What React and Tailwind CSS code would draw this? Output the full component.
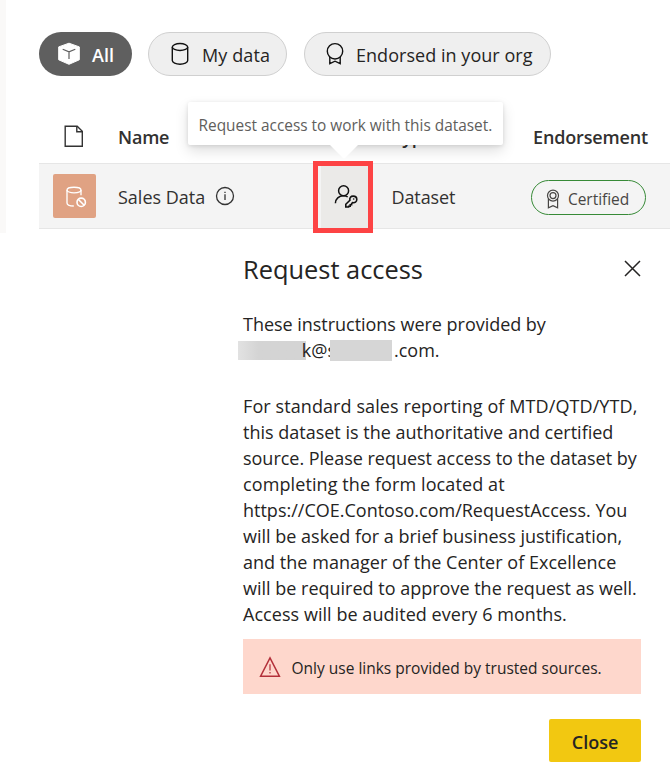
function BoxIcon() {
  return (
    <svg width="24" height="24" viewBox="0 0 24 24" className="shrink-0">
      <path d="M12 1.2 22.3 4.9V17.8L12 22.3 1.7 17.8V4.9Z" fill="#fff" stroke="#fff" strokeWidth="1" strokeLinejoin="round" />
      <path d="M5.7 7.2 12 9.9 18.3 7.2M12 9.9V17" fill="none" stroke="#5f5f5f" strokeWidth="1.2" />
    </svg>
  );
}

function CylinderIcon() {
  return (
    <svg width="18" height="24" viewBox="0 0 18 24" fill="none" stroke="#111" strokeWidth="1.4" className="shrink-0">
      <ellipse cx="9" cy="5" rx="7.7" ry="3.5" />
      <path d="M1.3 5V18.6C1.3 20.7 4.8 22.2 9 22.2S16.7 20.7 16.7 18.6V5" />
    </svg>
  );
}

function RibbonIcon() {
  return (
    <svg width="18" height="24" viewBox="0 0 18 24" fill="none" stroke="#111" strokeWidth="1.4" className="shrink-0">
      <circle cx="9" cy="9.3" r="7.7" />
      <path d="M3.8 15V21.7L9 19.2 14.2 21.7V15" />
    </svg>
  );
}

function FileIcon() {
  return (
    <svg width="20" height="23" viewBox="0 0 20 23" fill="none" stroke="#333" strokeWidth="1.4">
      <path d="M1.2 1.2H13.2L18.3 6.3V21.3H1.2Z" />
      <path d="M12.8 1.2V6.7H18.3" />
    </svg>
  );
}

function BlockedDataIcon() {
  return (
    <svg width="22" height="22" viewBox="0 0 22 22" fill="none" stroke="#fff" strokeWidth="1.35">
      <ellipse cx="9" cy="4" rx="7" ry="2.8" />
      <path d="M2 4V17C2 18.9 4.5 20 8.8 20M16 4V9.2" />
      <circle cx="16.2" cy="16.3" r="4.2" strokeWidth="1.6" />
      <path d="M13.2 13.3 19.2 19.3" strokeWidth="1.6" />
    </svg>
  );
}

function InfoIcon() {
  return (
    <svg width="20" height="20" viewBox="0 0 20 20" fill="none" stroke="#333" strokeWidth="1.3">
      <circle cx="10" cy="10" r="8.5" />
      <path d="M10 8.2V14M10 5.7V7.1" />
    </svg>
  );
}

function PersonKeyIcon() {
  return (
    <svg width="26" height="26" viewBox="0 0 26 26" fill="none" stroke="#111" strokeWidth="1.5">
      <circle cx="10.6" cy="6.8" r="5" />
      <path d="M2.4 19.3C2.4 14.8 6 11.8 10.4 11.8 12.2 11.8 13.6 12.2 14.7 13" />
      <path d="M12.8 20.3 16.9 16.2C16.3 13.9 17.9 12.1 20.1 12.1 22.3 12.1 23.8 13.5 23.8 15.5 23.8 17.8 21.8 19.1 19.6 18.6L18.6 19.6V20.8H17.2V22.2H15.6V23H12.8Z" strokeWidth="1.6" />
      <circle cx="20.7" cy="15" r="0.8" fill="#111" stroke="none" />
    </svg>
  );
}

function CertifiedIcon() {
  return (
    <svg width="14" height="20" viewBox="0 0 14 20" fill="none" stroke="#484644" strokeWidth="1.2" className="mt-[3px]">
      <circle cx="7" cy="6.6" r="5.5" />
      <circle cx="7" cy="6.6" r="3" />
      <path d="M2.4 10V18.8L7 16.6 11.6 18.8V10" />
    </svg>
  );
}

function WarningIcon() {
  return (
    <svg width="22" height="22" viewBox="0 0 22 22" fill="none" stroke="#b3303a" strokeWidth="1.5">
      <path d="M11 1.8 20.4 20.2H1.6Z" />
      <path d="M11 8.2V14.6M11 16V17.6" strokeWidth="1.2" />
    </svg>
  );
}

function Tooltip() {
  return (
    <div className="absolute left-[188px] top-[102px] z-10 h-[43px] w-[315px] rounded-[2px] bg-white pl-[10.5px] text-[15.4px] leading-[48px] text-[#605e5c] shadow-[0_6px_14px_rgba(0,0,0,0.13),0_1px_4px_rgba(0,0,0,0.11)]">
      Request access to work with this dataset.
      <svg width="28" height="14" viewBox="0 0 28 14" className="absolute left-[142px] top-[43px]">
        <path d="M0 0H28L15 13Q14 14 13 13Z" fill="#fff" />
      </svg>
    </div>
  );
}

const instructions = [
  { text: "For standard sales reporting of MTD/QTD/YTD,", spacing: "tracking-[0.09px]" },
  { text: "this dataset is the authoritative and certified", spacing: "tracking-normal" },
  { text: "source. Please request access to the dataset by", spacing: "tracking-[-0.02px]" },
  { text: "completing the form located at", spacing: "tracking-[0.1px]" },
  { text: "https://COE.Contoso.com/RequestAccess. You", spacing: "tracking-normal" },
  { text: "will be asked for a brief business justification,", spacing: "tracking-normal" },
  { text: "and the manager of the Center of Excellence", spacing: "tracking-[0.03px]" },
  { text: "will be required to approve the request as well.", spacing: "tracking-normal" },
  { text: "Access will be audited every 6 months.", spacing: "tracking-[0.05px]" },
];

export default function App() {
  return (
    <div className="relative h-[777px] w-[670px] overflow-hidden whitespace-nowrap bg-white font-['Open_Sans',sans-serif] text-[18px] text-[#252423]">
      <div className="flex h-[233px]">
        <div className="w-[6px] shrink-0 bg-[#faf9f8]" />
        <div className="flex-1 pl-[33px] pt-8">
          <div className="flex h-11 gap-4">
            <div className="flex w-[93px] items-center rounded-full bg-[#5f5f5f] pl-[18px] text-white">
              <BoxIcon />
              <span className="ml-[11px] mt-[3px] font-semibold">All</span>
            </div>
            <div className="flex w-[139px] items-center rounded-full border border-[#d0d0d0] bg-[#efefef] pl-[22px]">
              <CylinderIcon />
              <span className="ml-[13px] mt-[3px] tracking-[0.1px]">My data</span>
            </div>
            <div className="ml-[1px] flex w-[247px] items-center rounded-full border border-[#d0d0d0] bg-[#efefef] pl-[21px]">
              <RibbonIcon />
              <span className="ml-[12px] mt-[3px] tracking-[0.04px]">Endorsed in your org</span>
            </div>
          </div>
          <div className="mt-[35px] flex h-[52px] items-center font-semibold text-[#323130]">
            <div className="-mt-[2px] w-[79px] pl-[25px]"><FileIcon /></div>
            <div className="w-[274px] tracking-[-0.2px]">Name</div>
            <div className="w-[141px]">Type</div>
            <div className="tracking-[-0.15px]">Endorsement</div>
          </div>
          <div className="flex h-[66px] items-center border-y border-[#e6e6e6] bg-[#f4f4f4] text-[#323130]">
            <div className="w-[79px] pl-[14px]">
              <div className="flex h-11 w-[43px] items-center justify-center rounded-[2px] bg-[#e0a283] pl-[2px] pt-[2px]">
                <BlockedDataIcon />
              </div>
            </div>
            <div className="flex w-[195px] items-center gap-[10px]">
              <span className="mt-[2px]">Sales Data</span>
              <InfoIcon />
            </div>
            <div className="relative top-[1px] z-20 -my-1 h-[72px] w-[60px] shrink-0 border-[5px] border-[#fd4344] bg-[#f4f4f4] pl-[3px]">
              <div className="flex h-full items-center bg-[#ebeae8] pl-[12px]">
                <PersonKeyIcon />
              </div>
            </div>
            <div className="mt-[2px] w-[158px] pl-[18.5px] tracking-[-0.1px]">Dataset</div>
            <div className="mt-[2px] flex h-[35px] w-[115px] items-center rounded-full border border-[#378a37] pl-[14px] text-[#484644]">
              <CertifiedIcon />
              <span className="ml-2 mt-[5px] text-[15.5px] tracking-[-0.05px]">Certified</span>
            </div>
          </div>
        </div>
      </div>
      <Tooltip />

      <div className="ml-[243px] w-[398px]">
        <div className="flex h-[78px] items-start justify-between">
          <h1 className="pt-[18px] text-[25.4px] leading-9">Request access</h1>
          <svg width="17" height="17" viewBox="0 0 17 17" className="mt-[27px]" fill="none" stroke="#252423" strokeWidth="1.5">
            <path d="M1 1 16 16M16 1 1 16" />
          </svg>
        </div>
        <div className="leading-[26px]">
          <div className="tracking-[-0.03px]">These instructions were provided by</div>
          <div className="-ml-[5px] flex h-[26px]">
            <span className="mt-[4px] h-[19px] w-[68px] bg-linear-to-r from-[#e2e2e2] to-[#d4d4d4] to-30%" />
            <span className="flex w-[24px] justify-end"><span className="-mr-[6px]">k@s</span></span>
            <span className="relative mt-[3px] h-[21px] w-[62px] bg-[#d6d6d6]" />
            <span className="ml-[2px]">.com.</span>
          </div>
        </div>
        <div className="mt-[30px] leading-[26px]">
          {instructions.map((line) => (
            <div key={line.text} className={line.spacing}>{line.text}</div>
          ))}
        </div>
        <div className="mt-3 flex h-[55px] items-center bg-[#fed7cc] pl-4 text-[15.5px]">
          <WarningIcon />
          <span className="ml-[10.5px] mt-[5px]">Only use links provided by trusted sources.</span>
        </div>
        <div className="mt-[25px] flex justify-end">
          <button className="h-[43px] w-[92px] rounded-[2px] bg-[#f2c811] pt-[3px] font-semibold">Close</button>
        </div>
      </div>
    </div>
  );
}
